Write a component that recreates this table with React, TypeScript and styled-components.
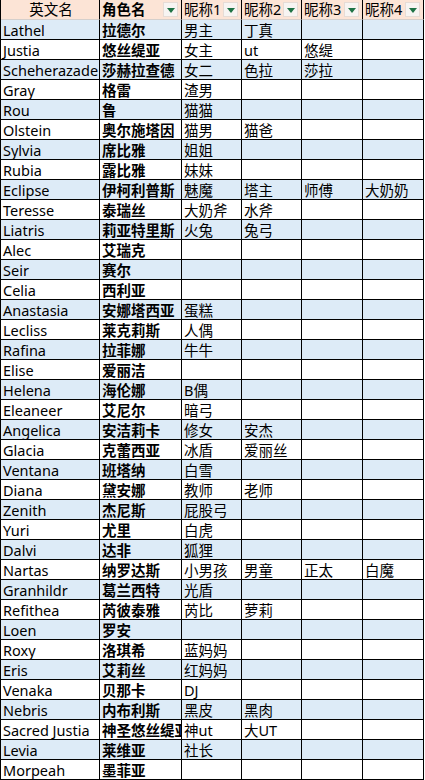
import styled, { createGlobalStyle } from "styled-components";

const GlobalStyle = createGlobalStyle`
  html, body {
    margin: 0;
    padding: 0;
    background: #ffffff;
  }
  body {
    font-family: "Noto Sans", "Noto Sans CJK SC", sans-serif;
  }
`;

type Row = [string, string, string?, string?, string?, string?];

const rows: Row[] = [
  ["Lathel", "拉德尔", "男主", "丁真"],
  ["Justia", "悠丝缇亚", "女主", "ut", "悠缇"],
  ["Scheherazade", "莎赫拉查德", "女二", "色拉", "莎拉"],
  ["Gray", "格雷", "渣男"],
  ["Rou", "鲁", "猫猫"],
  ["Olstein", "奥尔施塔因", "猫男", "猫爸"],
  ["Sylvia", "席比雅", "姐姐"],
  ["Rubia", "露比雅", "妹妹"],
  ["Eclipse", "伊柯利普斯", "魅魔", "塔主", "师傅", "大奶奶"],
  ["Teresse", "泰瑞丝", "大奶斧", "水斧"],
  ["Liatris", "莉亚特里斯", "火兔", "兔弓"],
  ["Alec", "艾瑞克"],
  ["Seir", "赛尔"],
  ["Celia", "西利亚"],
  ["Anastasia", "安娜塔西亚", "蛋糕"],
  ["Lecliss", "莱克莉斯", "人偶"],
  ["Rafina", "拉菲娜", "牛牛"],
  ["Elise", "爱丽洁"],
  ["Helena", "海伦娜", "B偶"],
  ["Eleaneer", "艾尼尔", "暗弓"],
  ["Angelica", "安洁莉卡", "修女", "安杰"],
  ["Glacia", "克蕾西亚", "冰盾", "爱丽丝"],
  ["Ventana", "班塔纳", "白雪"],
  ["Diana", "黛安娜", "教师", "老师"],
  ["Zenith", "杰尼斯", "屁股弓"],
  ["Yuri", "尤里", "白虎"],
  ["Dalvi", "达非", "狐狸"],
  ["Nartas", "纳罗达斯", "小男孩", "男童", "正太", "白魔"],
  ["Granhildr", "葛兰西特", "光盾"],
  ["Refithea", "芮彼泰雅", "芮比", "萝莉"],
  ["Loen", "罗安"],
  ["Roxy", "洛琪希", "蓝妈妈"],
  ["Eris", "艾莉丝", "红妈妈"],
  ["Venaka", "贝那卡", "DJ"],
  ["Nebris", "内布利斯", "黑皮", "黑肉"],
  ["Sacred Justia", "神圣悠丝缇亚", "神ut", "大UT"],
  ["Levia", "莱维亚", "社长"],
  ["Morpeah", "墨菲亚"],
];

const headers = [
  { label: "英文名", filter: false, bold: false, center: true },
  { label: "角色名", filter: true, bold: true, center: false },
  { label: "昵称1", filter: true, bold: false, center: false },
  { label: "昵称2", filter: true, bold: false, center: false },
  { label: "昵称3", filter: true, bold: false, center: false },
  { label: "昵称4", filter: true, bold: false, center: false },
];

const App = () => {
  return (
    <>
      <GlobalStyle />
      <Sheet>
        {headers.map((h) => (
          <HeaderCell key={h.label} $center={h.center}>
            <HeaderLabel $bold={h.bold}>{h.label}</HeaderLabel>
            {h.filter && (
              <FilterButton>
                <Arrow />
              </FilterButton>
            )}
          </HeaderCell>
        ))}
        {rows.map((row, i) =>
          [0, 1, 2, 3, 4, 5].map((c) => (
            <Cell key={`${i}-${c}`} $striped={i % 2 === 0} $bold={c === 1}>
              {row[c] ?? ""}
            </Cell>
          ))
        )}
      </Sheet>
    </>
  );
};

const Sheet = styled.div`
  display: grid;
  grid-template-columns: 99px 82px 60px 60px 61px 61px;
  grid-auto-rows: 20px;
  width: 424px;
  border-left: 1px solid #000000;
  box-sizing: border-box;
  width: 424px;
`;

const HeaderCell = styled.div<{ $center: boolean }>`
  display: flex;
  align-items: center;
  justify-content: ${(p) => (p.$center ? "center" : "flex-start")};
  background: #fce4d6;
  border-right: 1px solid #000000;
  border-bottom: 1px solid #d4cfcc;
  box-sizing: border-box;
  padding-left: 2px;
  overflow: hidden;
`;

const HeaderLabel = styled.span<{ $bold: boolean }>`
  flex: ${(p) => (p.$bold ? "1" : "0 1 auto")};
  font-size: 14.5px;
  font-weight: ${(p) => (p.$bold ? 700 : 400)};
  color: #000000;
  white-space: nowrap;
  line-height: 19px;
  ${HeaderCell}:not(:first-child) & {
    flex: 1;
  }
`;

const FilterButton = styled.span`
  display: flex;
  align-items: center;
  justify-content: center;
  width: 15px;
  height: 15px;
  margin-right: 3px;
  flex-shrink: 0;
  background: #f7f4f2;
  border: 1px solid #e6dcd6;
  box-sizing: border-box;
`;

const Arrow = styled.span`
  width: 0;
  height: 0;
  border-left: 4px solid transparent;
  border-right: 4px solid transparent;
  border-top: 5px solid #1e7346;
  margin-top: 1px;
`;

const Cell = styled.div<{ $striped: boolean; $bold: boolean }>`
  background: ${(p) => (p.$striped ? "#ddebf7" : "#ffffff")};
  border-right: 1px solid #000000;
  border-bottom: 1px solid #000000;
  box-sizing: border-box;
  padding-left: 2px;
  font-size: 14.5px;
  font-weight: ${(p) => (p.$bold ? 700 : 400)};
  line-height: 20px;
  color: #000000;
  white-space: nowrap;
  overflow: hidden;
`;

export default App;
